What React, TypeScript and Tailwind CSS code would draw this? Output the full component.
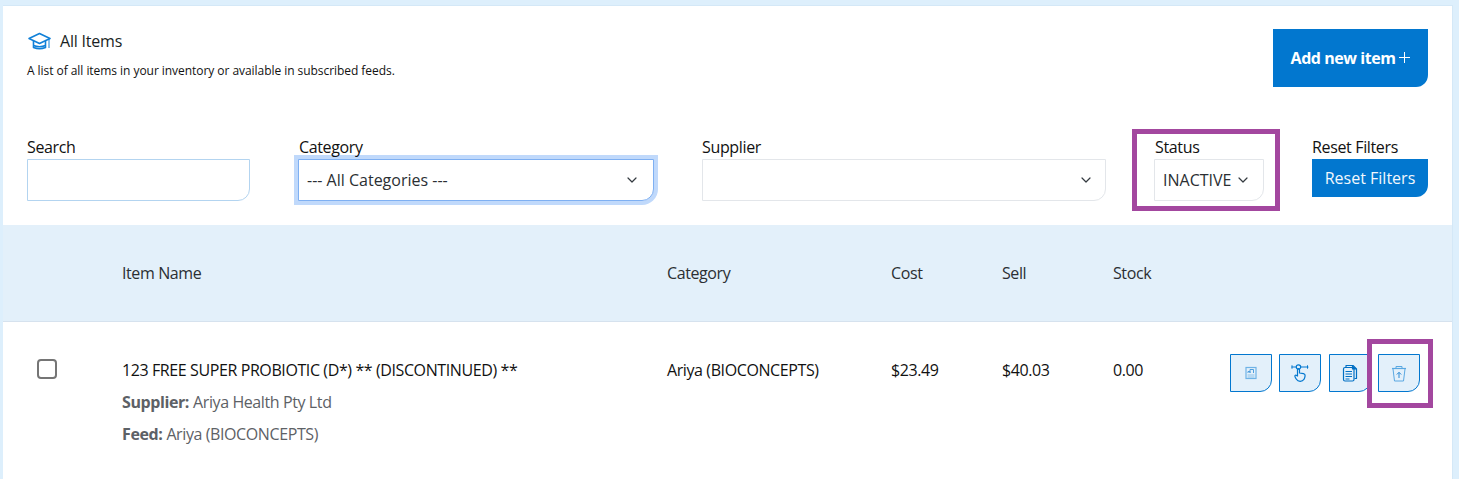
import React from "react";
import { ChevronDown } from "lucide-react";

function Cap() {
  return (
    <svg width="23" height="18" viewBox="0 0 23 18" fill="none" stroke="#1080d8" strokeWidth="1.600" strokeLinejoin="round">
      <path d="M11.5 1.500 22 6.500l-10.500 5L1 6.500z" />
      <path d="M5.500 9v6.500c3.500 1.400 8.500 1.400 12 0V9" />
      <path d="M5.500 13.500c3.500 1.400 8.500 1.400 12 0" />
      <path d="M21 7v9" strokeWidth="1" />
    </svg>
  );
}

const boxBtn =
  "flex h-[38px] w-[42px] items-center justify-center rounded-br-[12px] border border-[#0277cf] bg-[#e3f0fa]";

function ReportIcon() {
  return (
    <svg width="14" height="14" viewBox="0 0 14 14" fill="none">
      <rect x="2" y="1.500" width="10" height="11" stroke="#6fb3e6" strokeWidth="1.200" />
      <path d="M4 7V5.500h2V7M6 7V3.500h3.500V7" stroke="#4f9fde" strokeWidth="1" />
      <path d="M3.500 9h7M3.500 11h7" stroke="#8cc2ea" strokeWidth="1.200" />
    </svg>
  );
}

function TouchIcon() {
  return (
    <svg width="18" height="18" viewBox="0 0 18 18" fill="none" stroke="#0277cf" strokeWidth="1.200" strokeLinejoin="round" strokeLinecap="round">
      <path d="M1 3h16" />
      <path d="M1 1.700v2.600M16.500 1.700v2.600" strokeWidth="1" />
      <circle cx="7.500" cy="3" r="2.200" fill="#e3f0fa" />
      <path d="M6.500 12V5.500c0-1.300 2-1.300 2 0V9l4 .7c1 .2 1.700 1 1.600 2.100-.2 1.300-.5 2.600-1.100 3.500-.9 1.500-2.300 2-3.800 2-1.700 0-3-.7-3.800-2-.7-1.100-1.200-2-1.500-3-.3-1 .9-1.600 1.600-.8z" />
    </svg>
  );
}

function DocsIcon() {
  return (
    <svg width="16" height="18" viewBox="0 0 16 18" fill="none" stroke="#0270c4" strokeWidth="1.200" strokeLinejoin="round">
      <path d="M4 3V1.500h7l3.500 3.500v9.500H12.500" />
      <path d="M10.500 1.500V5h4" fill="#0270c4" />
      <rect x="1.500" y="3.500" width="10.500" height="13.500" rx="1.500" />
      <path d="M3.500 7.500h6.500M3.500 10h6.500M3.500 12.500h6.500M3.500 15h4" strokeWidth="1" />
    </svg>
  );
}

function TrashIcon() {
  return (
    <svg width="16" height="17" viewBox="0 0 16 17" fill="none" stroke="#5aa8e2" strokeWidth="1" strokeLinejoin="round">
      <path d="M1 3.500h14" strokeWidth="1.200" />
      <path d="M5 3.500V1.500h6v2" />
      <path d="M2 4l1.500 12h9L14 4" />
      <path d="M8 13V7.500M5.800 9.500 8 7.300l2.200 2.200" stroke="#2a8ad6" />
    </svg>
  );
}

function Label({ children }: { children: React.ReactNode }) {
  return <div className="h-[24px] text-[16px] leading-[24px] tracking-[-0.35px] text-[#111]">{children}</div>;
}

function SelectBox({ className, text, focus }: { className: string; text?: string; focus?: boolean }) {
  return (
    <div
      className={`flex h-[42px] items-center justify-between rounded-br-[12px] bg-white ${
        focus ? "border border-[#7fb0f2] shadow-[0_0_0_4px_#c0d9fb]" : "border border-[#e3e6ea]"
      } ${className}`}
    >
      <span className="whitespace-nowrap text-[16px] text-[#2b2f33]">{text}</span>
      <ChevronDown size={16} strokeWidth={1.8} color="#343a40" />
    </div>
  );
}

export default function App() {
  return (
    <div
      className="relative h-[479px] w-[1459px] overflow-hidden bg-[#ddeffc] pl-[3px] pr-[6px] pt-[5px]"
      style={{ fontFamily: '"Open Sans", sans-serif' }}
    >
      <div className="h-[474px] border-r border-t border-[#d4e8f7] bg-white">
        {/* Header */}
        <div className="flex h-[115px] items-start justify-between pl-[24px] pr-[24px]">
          <div className="pt-[25px]">
            <div className="flex h-[20px] items-center gap-[9px] pl-[1px]">
              <Cap />
              <span className="text-[16px] tracking-[-0.2px] text-[#1a1f24]">All Items</span>
            </div>
            <p className="mt-[12px] text-[12px] leading-[16px] tracking-[-0.05px] text-[#111]">
              A list of all items in your inventory or available in subscribed feeds.
            </p>
          </div>
          <div className="mt-[23px] flex h-[58px] w-[155px] items-center justify-center rounded-br-[12px] bg-[#0277cf] text-white">
            <span className="text-[16px] font-bold tracking-[-0.45px]">Add new item</span>
            <span className="relative ml-[4px] h-[11px] w-[11px] -translate-y-[1px]">
              <span className="absolute left-0 top-[5px] h-px w-[11px] bg-white" />
              <span className="absolute left-[5px] top-0 h-[11px] w-px bg-white" />
            </span>
          </div>
        </div>

        {/* Filters */}
        <div className="flex h-[104px] items-start gap-[48px] pl-[24px] pt-[14px]">
          <div className="w-[223px]">
            <Label>Search</Label>
            <div className="h-[42px] rounded-br-[12px] border border-[#b3d4f0] bg-white" />
          </div>
          <div className="w-[356px]">
            <div className="pl-[1px]"><Label>Category</Label></div>
            <SelectBox className="pl-[8px] pr-[13px]" text="--- All Categories ---" focus />
          </div>
          <div className="w-[404px]">
            <Label>Supplier</Label>
            <SelectBox className="pl-[9px] pr-[11px]" />
          </div>
          <div className="w-[110px]">
            <div className="pl-[1px]"><Label>Status</Label></div>
            <SelectBox className="pl-[8px] pr-[12px]" text="INACTIVE" />
          </div>
          <div className="w-[116px]">
            <Label>Reset Filters</Label>
            <div className="flex h-[38px] items-center justify-center rounded-br-[12px] bg-[#0277cf] pb-[1px] text-[16px] text-[#f2f8fd]">
              Reset Filters
            </div>
          </div>
        </div>

        {/* Table header */}
        <div className="grid h-[97px] grid-cols-[119px_545px_224px_111px_111px_117px_1fr] items-center border-b border-[#d6e2ee] bg-[#e3f0fa] text-[16px] tracking-[-0.4px] text-[#2b2f33]">
          <div />
          <div>Item Name</div>
          <div>Category</div>
          <div>Cost</div>
          <div>Sell</div>
          <div>Stock</div>
          <div />
        </div>

        {/* Row */}
        <div className="grid grid-cols-[119px_545px_224px_111px_111px_117px_1fr] items-start pt-[32px] text-[16px] tracking-[-0.4px] text-[#111]">
          <div className="pl-[34px] pt-[5px]">
            <div className="h-[20px] w-[20px] rounded-[4px] border-2 border-[#757575] bg-white" />
          </div>
          <div>
            <div className="flex h-[32px] items-center whitespace-nowrap">123 FREE SUPER PROBIOTIC (D*) ** (DISCONTINUED) **</div>
            <div className="flex h-[32px] items-center whitespace-nowrap text-[#5d6166]">
              <b className="mr-[4px] font-bold">Supplier:</b> Ariya Health Pty Ltd
            </div>
            <div className="flex h-[32px] items-center whitespace-nowrap text-[#5d6166]">
              <b className="mr-[4px] font-bold">Feed:</b> Ariya (BIOCONCEPTS)
            </div>
          </div>
          <div className="flex h-[32px] items-center whitespace-nowrap">Ariya (BIOCONCEPTS)</div>
          <div className="flex h-[32px] items-center">$23.49</div>
          <div className="flex h-[32px] items-center">$40.03</div>
          <div className="flex h-[32px] items-center">0.00</div>
          <div className="flex gap-[7.33px]">
            <div className={boxBtn}><ReportIcon /></div>
            <div className={boxBtn}><TouchIcon /></div>
            <div className={boxBtn}><DocsIcon /></div>
            <div className={boxBtn}><TrashIcon /></div>
          </div>
        </div>
      </div>

      {/* Annotation highlights */}
      <div className="absolute left-[1132px] top-[129px] h-[82px] w-[148px] border-[5px] border-[#a3479f]" />
      <div className="absolute left-[1367px] top-[339px] h-[69px] w-[66px] border-[5px] border-[#a3479f]" />
    </div>
  );
}
